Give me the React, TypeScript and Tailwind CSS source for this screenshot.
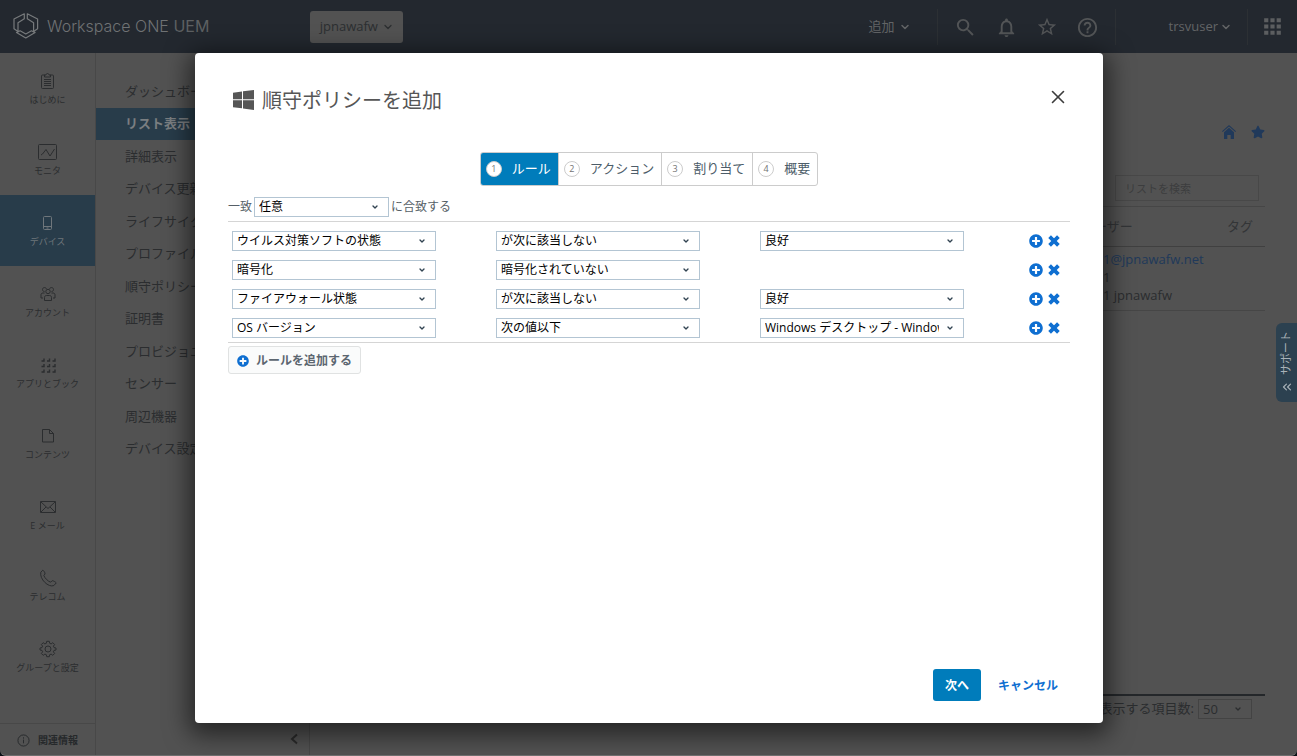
import React, { useState } from 'react'
import { MdApps, MdHelpOutline, MdNotificationsNone, MdSearch, MdStarBorder } from 'react-icons/md'
import { FaPlusCircle, FaStar } from 'react-icons/fa'
import { ChevronDown, ChevronsLeft, X } from 'lucide-react'

const stroke = { fill: 'none', stroke: 'currentColor', strokeWidth: 1 }

const navItems = [
  {
    label: 'はじめに',
    icon: (
      <svg viewBox="0 0 18 18" className="h-[18px] w-[18px]" {...stroke}>
        <path d="M6 3H3.500a1 1 0 0 0-1 1v11.500a1 1 0 0 0 1 1h10a1 1 0 0 0 1-1V4a1 1 0 0 0-1-1H11M5.500 5V3H7c0-2 3-2 3 0h1.500v2zM5 7.500h7M5 9.500h7M5 11.500h7M5 13.500h7" />
      </svg>
    ),
  },
  {
    label: 'モニタ',
    icon: (
      <svg viewBox="0 0 22 18" className="h-[18px] w-[22px]" {...stroke}>
        <rect x="1.5" y="1.5" width="18" height="15" rx="1" />
        <path d="M4 12l1.500-1 3.500-4.500 4 6.500L17.500 6" />
      </svg>
    ),
  },
  {
    label: 'デバイス',
    icon: (
      <svg viewBox="0 0 18 18" className="h-[18px] w-[18px]" {...stroke}>
        <rect x="4.500" y="2.500" width="8" height="13" rx="1" />
        <path d="M4.500 12.500h8M7.500 14h2" />
      </svg>
    ),
  },
  {
    label: 'アカウント',
    icon: (
      <svg viewBox="0 0 18 18" className="h-[18px] w-[18px]" {...stroke}>
        <circle cx="9" cy="6.500" r="2.200" />
        <path d="M5.500 15.500v-3c0-1.500 1-2 2-2h3c1 0 2 .5 2 2v3zM5.500 6.500c-1.500 0-2-1-2-2 0-2.500 3.500-2.500 4-.5M12.500 6.500c1.500 0 2-1 2-2 0-2.500-3.500-2.500-4-.5M4 13H2v-3c0-1.200.5-2 2-2h1.500M14 13h2v-3c0-1.200-.5-2-2-2h-1.500" />
      </svg>
    ),
  },
  {
    label: 'アプリとブック',
    icon: (
      <svg viewBox="0 0 18 18" className="h-[18px] w-[18px]" {...stroke} strokeWidth={1.4}>
        <path d="M2.500 5H5V2.500M8 5h2.500V2.500M13.500 5H16V2.500M2.500 10.500H5V8M8 10.500h2.500V8M13.500 10.500H16V8M2.500 16H5v-2.500M8 16h2.500v-2.500M13.500 16H16v-2.500" />
      </svg>
    ),
  },
  {
    label: 'コンテンツ',
    icon: (
      <svg viewBox="0 0 18 18" className="h-[18px] w-[18px]" {...stroke}>
        <path d="M3.500 2.500h7l4 4v8.500h-11zM10.500 2.500v4h4" />
      </svg>
    ),
  },
  {
    label: 'E メール',
    icon: (
      <svg viewBox="0 0 18 18" className="h-[18px] w-[18px]" {...stroke}>
        <path d="M1.500 3.500h15v11h-15zM2 4l7 6.500L16 4M2 14l5-5M16 14l-5-5" />
      </svg>
    ),
  },
  {
    label: 'テレコム',
    icon: (
      <svg viewBox="0 0 18 18" className="h-[18px] w-[18px]" {...stroke}>
        <path d="M1.800 3.200L3.800 1.200c1.200.6 2 2 2.300 3.800L4.800 6.300c.7 2.600 4.200 6.100 6.900 6.900l1.500-1.500c1.600.2 2.900 1 4 2.200l-2.300 2.600C9.500 19 .3 10 1.800 3.200z" />
      </svg>
    ),
  },
  {
    label: 'グループと設定',
    icon: (
      <svg viewBox="0 0 18 18" className="h-[18px] w-[18px]" {...stroke}>
        <circle cx="9" cy="9" r="3" />
        <path d="M7.700 1.300h2.600l.4 2 1.400.6 1.700-1.200 1.800 1.800-1.200 1.700.6 1.400 2 .4v2l-2 .4-.6 1.400 1.200 1.700-1.800 1.800-1.700-1.200-1.400.6-.4 2H7.700l-.4-2-1.400-.6-1.700 1.200-1.800-1.800 1.200-1.700-.6-1.400-2-.4V8l2-.4.6-1.400-1.200-1.700 1.800-1.800 1.700 1.200 1.400-.6z" />
      </svg>
    ),
  },
]

const menuItems = [
  'ダッシュボード',
  'リスト表示',
  '詳細表示',
  'デバイス更新',
  'ライフサイクル',
  'プロファイル',
  '順守ポリシー',
  '証明書',
  'プロビジョニング',
  'センサー',
  '周辺機器',
  'デバイス設定',
]

const steps = ['ルール', 'アクション', '割り当て', '概要']

const rules = [
  { id: 1, target: 'ウイルス対策ソフトの状態', operator: 'が次に該当しない', value: '良好' },
  { id: 2, target: '暗号化', operator: '暗号化されていない', value: null },
  { id: 3, target: 'ファイアウォール状態', operator: 'が次に該当しない', value: '良好' },
  { id: 4, target: 'OS バージョン', operator: '次の値以下', value: 'Windows デスクトップ - Windows' },
]

function Select({ label, value, className }: { label: string; value: string; className: string }) {
  return (
    <div className={`relative h-5 ${className}`}>
      <select
        aria-label={label}
        className="block h-5 w-full appearance-none border border-[#b3c5d3] bg-white pl-1 pr-6 text-xs leading-[18px] text-black"
      >
        <option>{value}</option>
      </select>
      <ChevronDown className="pointer-events-none absolute right-2 top-1 h-3 w-3 p-[2px] text-[#314351]" strokeWidth={4} />
    </div>
  )
}

function Header() {
  return (
    <header className="flex h-[53px] shrink-0 items-center bg-[#23282f] text-[#6f7274]">
      <svg viewBox="0 0 26 26" className="mb-[2px] ml-[13px] h-[26px] w-[26px]" fill="none" stroke="#777a7c" strokeWidth="1.200" strokeLinejoin="round">
        <path d="M11.300.8L1 6v9.800l4 2.800V9.800l6.300-4zM14.300.8L24.600 6v9.800l-4 2.800V9.800l-6.300-4zM3.500 19.600L12.800 25l9.300-5.400-3.600-1.800-5.700 3.200-5.700-3.200z" />
      </svg>
      <div className="mb-[2px] ml-2 font-[Inter] text-base font-light">
        Workspace ONE <span className="font-normal text-[#5d6062]">UEM</span>
      </div>
      <button className="ml-[101px] flex h-8 w-[93px] items-center justify-center gap-1 rounded-[3px] bg-[#525252] text-[13px] text-[#2c2f31]">
        jpnawafw
        <ChevronDown className="h-3 w-3" strokeWidth={2.5} />
      </button>

      <button className="ml-auto flex items-center gap-1 text-[13px] text-[#626466]">
        追加
        <ChevronDown className="h-3 w-3" strokeWidth={3} />
      </button>
      <div className="ml-[26px] h-9 w-px bg-[#2c3034]" />
      <div className="flex w-[177px] items-center gap-[18px] pl-4 pt-px text-[#535557]">
        <button aria-label="検索"><MdSearch className="block h-[23px] w-[23px]" /></button>
        <button aria-label="通知"><MdNotificationsNone className="block h-[23px] w-[23px]" /></button>
        <button aria-label="お気に入り"><MdStarBorder className="block h-[22px] w-[22px]" /></button>
        <button aria-label="ヘルプ"><MdHelpOutline className="block h-[23px] w-[23px]" /></button>
      </div>
      <div className="h-9 w-px bg-[#2c3034]" />
      <button className="ml-[53px] flex items-center gap-[2px] text-[13px] text-[#626466]">
        trsvuser
        <ChevronDown className="h-3 w-3" strokeWidth={3} />
      </button>
      <div className="ml-[15px] h-9 w-px bg-[#2c3034]" />
      <button aria-label="アプリ" className="ml-3 mr-3 text-[#5c5e60]">
        <MdApps className="block h-[25px] w-[25px]" />
      </button>
    </header>
  )
}

function SideNav() {
  return (
    <nav className="flex w-24 shrink-0 flex-col border-r border-[#484848]">
      {navItems.map((item) => (
        <a
          key={item.label}
          href="#"
          className={`flex h-[71px] flex-col items-center pt-[19px] text-[9px] leading-[19px] ${
            item.label === 'デバイス' ? 'bg-[#283c4a] text-[#6f767b]' : 'text-[#2b2d2f]'
          }`}
        >
          {item.icon}
          {item.label}
        </a>
      ))}
      <a href="#" className="mt-auto flex h-8 items-center gap-2 border-t border-[#484848] pl-[17px] pt-px text-[10px] font-bold text-[#26292b]">
        <svg viewBox="0 0 14 14" className="h-[13px] w-[13px]" {...stroke}>
          <circle cx="7" cy="7" r="6" />
          <path d="M7 6v4M7 3.500v1.500" />
        </svg>
        関連情報
      </a>
    </nav>
  )
}

function SubMenu() {
  return (
    <div className="flex w-[214px] shrink-0 flex-col border-r border-[#484848] pt-[22px]">
      <ul className="flex h-[390px] flex-col">
        {menuItems.map((item) => (
          <li key={item} className="flex flex-1">
            <a
              href="#"
              className={`flex w-full items-center pl-[29px] text-[13px] ${
                item === 'リスト表示' ? 'bg-[#283c4a] font-bold text-[#7a7e81]' : 'text-[#2b2d2f]'
              }`}
            >
              {item}
            </a>
          </li>
        ))}
      </ul>
      <button aria-label="メニューを閉じる" className="mb-[10px] ml-auto mr-[10px] mt-auto text-[#2b2b2b]">
        <svg viewBox="0 0 10 12" className="h-3 w-[10px]" fill="none" stroke="currentColor" strokeWidth="2">
          <path d="M8 1.500L3 6l5 4.500" />
        </svg>
      </button>
    </div>
  )
}

function DeviceList() {
  return (
    <main className="flex min-w-0 flex-1 flex-col items-end pr-8 text-[13px] text-[#2b2d2f]">
      <div className="mt-[72px] flex gap-[15px] text-[#20395a]">
        <a href="#" aria-label="ホーム">
          <svg viewBox="0 0 14 14" className="h-[14px] w-[14px]" fill="currentColor">
            <path d="M7 0l7 6.200-.7.800L7 1.500.7 7 0 6.200zM7 2.800l5 4.400V14H8.700v-4H5.300v4H2V7.200z" />
          </svg>
        </a>
        <a href="#" aria-label="お気に入り"><FaStar className="block h-[14px] w-[14px]" /></a>
      </div>
      <input
        aria-label="リストを検索"
        placeholder="リストを検索"
        className="mr-[6px] mt-9 h-[26px] w-36 border border-[#484848] bg-transparent pl-[9px] text-[11px] placeholder:text-[#3c3d3e]"
      />
      <table className="mt-[5px] w-full table-fixed border-collapse border-y border-[#464646]">
        <thead>
          <tr className="h-10 border-b border-[#404040] text-left text-[#333537]">
            <th className="font-normal"></th>
            <th className="w-[146px] font-normal">ユーザー</th>
            <th className="w-[38px] font-normal">タグ</th>
          </tr>
        </thead>
        <tbody>
          <tr className="h-[64px]">
            <td></td>
            <td className="pl-[22px] align-top leading-[18px]">
              <a href="#" className="block pt-[3px] text-[#20395a]">1@jpnawafw.net</a>
              <div>1</div>
              <div>1 jpnawafw</div>
            </td>
            <td></td>
          </tr>
        </tbody>
      </table>
      <div className="mb-9 mt-auto flex w-full items-center justify-end gap-1 border-t-2 border-[#24272a] pr-[13px] pt-[3px]">
        <label htmlFor="page-size">表示する項目数:</label>
        <div className="relative">
          <select id="page-size" className="block h-5 w-[54px] appearance-none border border-[#434343] bg-transparent pl-1 leading-[18px]">
            <option>50</option>
          </select>
          <ChevronDown className="pointer-events-none absolute right-2 top-1 h-3 w-3 p-[2px]" strokeWidth={4} />
        </div>
      </div>
    </main>
  )
}

function PolicyDialog() {
  const [activeStep, setActiveStep] = useState(0)

  return (
    <div
      role="dialog"
      aria-labelledby="dialog-title"
      className="flex flex-1 flex-col rounded bg-white px-[33px] pb-[22px] shadow-[0_6px_24px_6px_rgba(0,0,0,0.55)]"
    >
      {/* Title */}
      <div className="flex items-center pl-[5px] pt-[30px] text-[#565656]">
        <svg viewBox="0 0 21 20" className="h-5 w-[21px]" fill="currentColor">
          <path d="M0 2.700L9 1.500v7.700H0zM10 1.300L21 0v9.200H10zM0 10.200h9v8.100l-9-1.100zM10 10.200h11V20l-11-1.600z" />
        </svg>
        <h1 id="dialog-title" className="ml-2 pt-[2px] text-xl leading-8">順守ポリシーを追加</h1>
        <button aria-label="閉じる" className="mb-[6px] ml-auto mr-px text-[#3c3c3c]">
          <X className="block h-[22px] w-[22px]" strokeWidth={1.75} />
        </button>
      </div>

      {/* Steps */}
      <div className="mt-[35px] flex h-[34px] self-center overflow-hidden rounded-[3px] border border-[#ccc]">
        {steps.map((step, i) => (
          <button
            key={step}
            onClick={() => setActiveStep(i)}
            className={`flex items-center gap-[10px] pl-[5px] pr-[7px] text-[13px] ${i > 0 ? 'border-l border-[#ccc]' : ''} ${
              activeStep === i ? 'bg-[#007cbb] text-white' : 'text-[#4d5d69]'
            }`}
          >
            <span className="flex h-4 w-4 items-center justify-center rounded-full border border-[#ccc] bg-white text-[9px] text-[#737373]">
              {i + 1}
            </span>
            {step}
          </button>
        ))}
      </div>

      {/* Match condition */}
      <div className="mt-[11px] flex items-center gap-[2px] text-xs text-[#565f67]">
        一致
        <Select label="一致" value="任意" className="w-[135px]" />
        に合致する
      </div>

      {/* Rules */}
      <div className="mt-1 flex flex-col gap-[9px] border-y border-[#d5d5d5] pb-1 pl-1 pt-[9px]">
        {rules.map((rule) => (
          <div key={rule.id} className="grid grid-cols-[264fr_264fr_264fr_46fr]">
            <Select label="項目" value={rule.target} className="w-[204px]" />
            <Select label="条件" value={rule.operator} className="w-[204px]" />
            {rule.value ? <Select label="値" value={rule.value} className="w-[204px]" /> : <div />}
            <div className="flex items-center gap-[5px] pl-[5px] text-[#0f6fd1]">
              <button aria-label="ルールを追加"><FaPlusCircle className="block h-[14px] w-[14px]" /></button>
              <button aria-label="ルールを削除">
                <svg viewBox="0 0 12 12" className="block h-3 w-3" stroke="currentColor" strokeWidth="3.800">
                  <path d="M1.600 1.600l8.800 8.800M10.400 1.600l-8.800 8.800" />
                </svg>
              </button>
            </div>
          </div>
        ))}
      </div>
      <button className="mt-[3px] flex h-7 items-center gap-[7px] self-start rounded-[3px] border border-[#e0e2e2] bg-[#fafbfb] px-2 pt-px text-xs font-bold text-[#5c6670]">
        <FaPlusCircle className="h-3 w-3 text-[#0f6fd1]" />
        ルールを追加する
      </button>

      {/* Actions */}
      <div className="mt-auto flex justify-end gap-[17px] pr-3 text-xs font-bold">
        <button className="h-8 w-12 rounded-[3px] bg-[#007cbb] pt-px text-white">次へ</button>
        <button className="pt-[2px] text-[#0f6fd1]">キャンセル</button>
      </div>
    </div>
  )
}

export default function App() {
  return (
    <div className="bg-[#0b1016] font-['Open_Sans','Noto_Sans_CJK_JP',sans-serif]">
      <div className="relative flex h-screen flex-col overflow-hidden rounded-b-md border-b border-[#6e6e6e] bg-[#525252]">
        <Header />
        <div className="flex min-h-0 flex-1">
          <SideNav />
          <SubMenu />
          <DeviceList />
        </div>

        <div className="absolute inset-0 flex pb-8 pl-[195px] pr-[194px] pt-[53px]">
          <PolicyDialog />
        </div>

        <button className="absolute right-0 top-[323px] flex h-[79px] w-[21px] flex-col items-center justify-center gap-[5px] rounded-l-md bg-[#2c4150] text-[11px] text-[#a9b2b8]">
          <span className="rotate-180 [text-orientation:sideways] [writing-mode:vertical-rl]">サポート</span>
          <ChevronsLeft className="h-[14px] w-[14px]" strokeWidth={2} />
        </button>
      </div>
    </div>
  )
}
